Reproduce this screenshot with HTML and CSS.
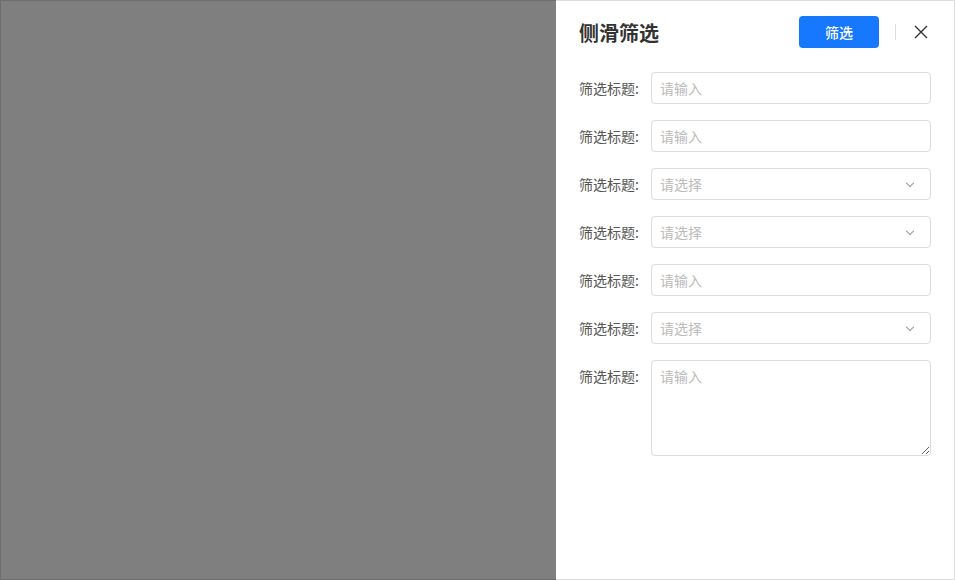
FILE: index.html
```html
<!DOCTYPE html>
<html lang="zh-CN">
<head>
  <meta charset="UTF-8">
  <meta name="viewport" content="width=device-width, initial-scale=1.0">
  <title>侧滑筛选</title>
  <link rel="stylesheet" href="styles.css">
</head>
<body>
  <div class="frame">
    <div class="mask"></div>

    <div class="drawer">
      <div class="drawer-header">
        <h2 class="drawer-title">侧滑筛选</h2>
        <button class="btn-primary">筛选</button>
        <span class="divider"></span>
        <span class="close">
          <svg width="14" height="14" viewBox="0 0 14 14">
            <path d="M1 1 L13 13 M13 1 L1 13" stroke="#333" stroke-width="1.4" fill="none"/>
          </svg>
        </span>
      </div>

      <div class="form">
        <div class="form-row">
          <label>筛选标题:</label>
          <input class="field" type="text" placeholder="请输入">
        </div>
        <div class="form-row">
          <label>筛选标题:</label>
          <input class="field" type="text" placeholder="请输入">
        </div>
        <div class="form-row">
          <label>筛选标题:</label>
          <div class="field select"><span>请选择</span><i class="arrow"></i></div>
        </div>
        <div class="form-row">
          <label>筛选标题:</label>
          <div class="field select"><span>请选择</span><i class="arrow"></i></div>
        </div>
        <div class="form-row">
          <label>筛选标题:</label>
          <input class="field" type="text" placeholder="请输入">
        </div>
        <div class="form-row">
          <label>筛选标题:</label>
          <div class="field select"><span>请选择</span><i class="arrow"></i></div>
        </div>
        <div class="form-row">
          <label>筛选标题:</label>
          <textarea class="field area" placeholder="请输入"></textarea>
        </div>
      </div>
    </div>
  </div>
</body>
</html>
```

FILE: styles.css
```css
html, body {
  margin: 0;
  padding: 0;
  background: #fff;
}

body {
  font-family: "Noto Sans CJK SC", "Noto Sans", sans-serif;
}

.frame {
  position: relative;
  width: 955px;
  height: 580px;
  box-sizing: border-box;
  border: 1px solid #dcdcdc;
  display: flex;
  justify-content: flex-end;
}

.mask {
  position: absolute;
  top: -1px;
  left: -1px;
  right: 398px;
  bottom: -1px;
  background-color: rgba(0, 0, 0, 0.5);
}

.drawer {
  width: 398px;
  height: 100%;
  box-sizing: border-box;
  padding: 15px 23px 0 23px;
  background: #fff;
}

.drawer-header {
  display: flex;
  align-items: center;
  height: 32px;
  margin-bottom: 24px;
}

.drawer-title {
  flex: 1;
  margin: 0;
  font-size: 20px;
  font-weight: bold;
  color: #333;
}

.btn-primary {
  width: 80px;
  height: 32px;
  border: none;
  border-radius: 4px;
  background-color: #1677ff;
  color: #fff;
  font-family: inherit;
  font-size: 14px;
  font-weight: 500;
  cursor: pointer;
}

.divider {
  width: 1px;
  height: 16px;
  background: #ddd;
  margin: 0 18px 0 16px;
}

.close {
  display: flex;
  width: 14px;
  height: 14px;
  margin-right: 3px;
  cursor: pointer;
}

.form-row {
  display: flex;
  align-items: flex-start;
  margin-bottom: 16px;
}

.form-row label {
  width: 72px;
  flex-shrink: 0;
  line-height: 32px;
  font-size: 14px;
  color: #555;
}

.field {
  width: 280px;
  height: 32px;
  box-sizing: border-box;
  border: 1px solid #dcdcdc;
  border-radius: 4px;
  padding: 0 8px;
  font-family: inherit;
  font-size: 14px;
  color: #333;
  outline: none;
  background: #fff;
}

.field::placeholder {
  color: #bbb;
}

.select {
  display: flex;
  align-items: center;
  justify-content: space-between;
  color: #bbb;
}

.arrow {
  width: 5px;
  height: 5px;
  border-right: 1px solid #999;
  border-bottom: 1px solid #999;
  transform: rotate(45deg);
  margin: -3px 9px 0 0;
}

.area {
  height: 96px;
  padding: 4px 8px;
  line-height: 22px;
  resize: vertical;
}
```
